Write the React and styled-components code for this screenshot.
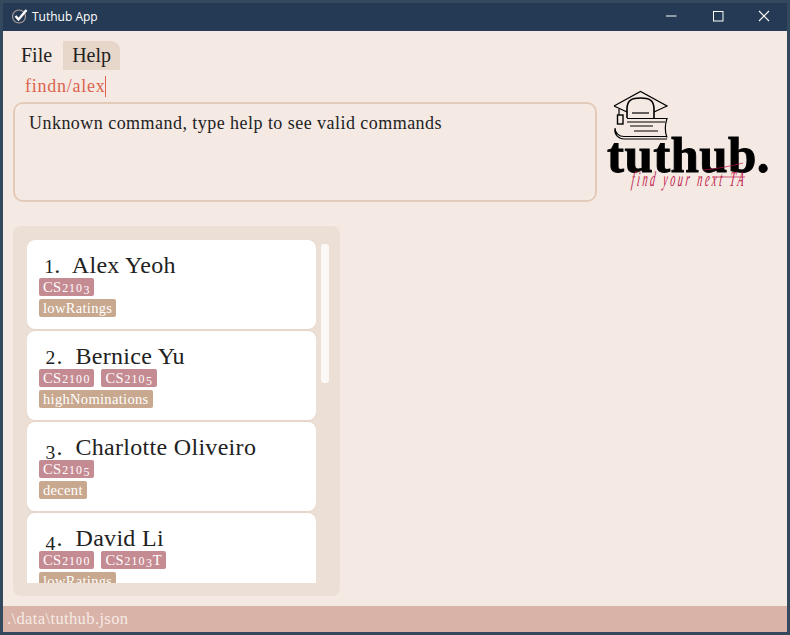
import React from 'react';
import styled, { createGlobalStyle } from 'styled-components';

const people = [
  { name: 'Alex Yeoh', mods: ['CS2103'], tags: ['lowRatings'] },
  { name: 'Bernice Yu', mods: ['CS2100', 'CS2105'], tags: ['highNominations'] },
  { name: 'Charlotte Oliveiro', mods: ['CS2105'], tags: ['decent'] },
  { name: 'David Li', mods: ['CS2100', 'CS2103T'], tags: ['lowRatings'] },
];

const GlobalStyle = createGlobalStyle`
  html, body {
    margin: 0;
    padding: 0;
    width: 790px;
    height: 635px;
    overflow: hidden;
    background: #34495e;
  }
  * {
    box-sizing: border-box;
  }
`;

const Frame = styled.div`
  width: 790px;
  height: 635px;
  display: flex;
  flex-direction: column;
  border: 3px solid #34495e;
  font-family: 'Liberation Serif', serif;
`;

const TitleBar = styled.div`
  height: 28px;
  flex: none;
  display: flex;
  align-items: center;
  background: #253a54;
  color: #fff;
  font-family: 'Open Sans', sans-serif;
  font-size: 12px;
  padding: 0 0 2px 8px;
`;

const TitleText = styled.span`
  margin-left: 3px;
  flex: 1;
`;

const WinButton = styled.div`
  width: 46px;
  height: 26px;
  display: flex;
  align-items: center;
  justify-content: center;
`;

const Body = styled.div`
  flex: 1;
  min-height: 0;
  display: flex;
  flex-direction: column;
  background: #f4e9e3;
`;

const MenuBar = styled.div`
  display: flex;
  gap: 2px;
  padding: 10px 0 0 9px;
  height: 39px;
  flex: none;
`;

const MenuItem = styled.div`
  height: 29px;
  padding: 0 9px;
  font-size: 20px;
  line-height: 28px;
  color: #222;
  border-radius: 0 9px 0 0;
  background: ${(p) => (p.$active ? '#e7d6ca' : 'transparent')};
`;

const CommandLine = styled.div`
  flex: none;
  height: 32px;
  padding: 6px 0 0 22px;
`;

const CommandText = styled.span`
  display: inline-block;
  height: 21px;
  font-size: 18px;
  line-height: 20px;
  letter-spacing: 0.75px;
  color: #dc644e;
  border-right: 1px solid #dc644e;
`;

const TopRow = styled.div`
  flex: none;
  display: flex;
  height: 100px;
  padding-left: 10px;
`;

const ResultBox = styled.div`
  width: 584px;
  height: 100px;
  padding: 8px 14px;
  border: 2px solid #e4cbb9;
  border-radius: 10px;
  background:
    linear-gradient(135deg, #fdfbfa 2px, transparent 6px),
    linear-gradient(315deg, #fdfbfa 2px, transparent 6px);
  font-size: 18px;
  line-height: 22px;
  letter-spacing: 0.46px;
  color: #222;
`;

const LogoWrap = styled.div`
  width: 175px;
  height: 120px;
  margin: -17px 0 0 3px;
`;

const ListPanel = styled.div`
  flex: none;
  width: 327px;
  height: 370px;
  margin: 24px 0 0 10px;
  padding: 14px 10px 13px 14px;
  display: flex;
  gap: 5px;
  background: #ecdfd6;
  border-radius: 8px;
`;

const Cards = styled.div`
  width: 289px;
  height: 343px;
  overflow: hidden;
  display: flex;
  flex-direction: column;
  gap: 2px;
`;

const Card = styled.div`
  flex: none;
  height: 89px;
  padding: 12px 12px 0;
  background: #fff;
  border-radius: 8px;
  box-shadow: 0 0 0 1px #e7d6c9;
`;

const CardName = styled.div`
  padding-left: 5px;
  font-size: 24px;
  line-height: 26px;
  letter-spacing: 0.3px;
  color: #222;
  white-space: pre;
`;

const TagRow = styled.div`
  display: flex;
  gap: 7px;
  height: 18px;
  margin-bottom: 3px;
`;

const Tag = styled.span`
  height: 18px;
  padding: 0 4px;
  border-radius: 2px;
  font-size: 14.5px;
  line-height: 18px;
  letter-spacing: 0.32px;
  white-space: pre;
  color: #fff;
  background: ${(p) => (p.$kind === 'mod' ? '#c58b93' : '#c8a88e')};
`;

// the app's font has old-style figures, this one does not
const Digit = styled.span`
  display: inline-block;
  width: ${(p) => (p.$narrow ? '0.52em' : '0.64em')};
  font-size: 0.82em;
  line-height: 0;
  text-align: center;
  letter-spacing: 0;
  vertical-align: ${(p) => (p.$drop ? '-0.18em' : '0')};
`;

const ScrollThumb = styled.div`
  width: 8px;
  height: 139px;
  margin-top: 4px;
  background: #fbf8f6;
  border-radius: 3px;
`;

const StatusBar = styled.div`
  flex: none;
  margin-top: auto;
  height: 26px;
  padding-left: 4px;
  background: #d9b2a8;
  color: #f6ebe5;
  font-size: 16.5px;
  line-height: 26px;
  letter-spacing: 0.38px;
`;

const OldNums = ({ text }) =>
  text.split(/(\d)/).map((part, i) =>
    /\d/.test(part) ? (
      <Digit key={i} $narrow={part === '1'} $drop={'345'.includes(part)}>
        {part}
      </Digit>
    ) : (
      part
    ),
  );

const AppIcon = () => (
  <svg width="18" height="18" viewBox="0 0 18 18" fill="none">
    <circle cx="8" cy="9.5" r="6.5" stroke="#a89c97" strokeWidth="1.2" />
    <path d="M4.5 9l3 3.5L15.5 3" stroke="#fff" strokeWidth="2.4" />
  </svg>
);

// viewBox sits at page x 600, y 85
const Logo = () => (
  <svg width="175" height="120" viewBox="0 0 175 120" fill="none">
    <g stroke="#000" strokeWidth="1.2">
      <path d="M14 21L40.500 6.500 67 21 54 27M14 21l13 6" />
      <path d="M27 33v-9c0-9 5-11 13.500-11S54 15 54 24v9" strokeWidth="1.6" />
      <path d="M32 28h17" />
      <path d="M19 24v6" />
      <path d="M27 33.500h40c-2 6-2 14 0 19" />
      <path d="M27 37h38M30 41h23M34 46h24" />
      <path d="M15 43c0 5 4 8.500 9 8.500h43M15 43c-1 7 4 11 9 11h43" />
    </g>
    <rect x="17.500" y="30" width="5.500" height="9" fill="#f4e9e3" stroke="#000" strokeWidth="1.4" />
    <text
      x="7"
      y="87"
      fontFamily="'Liberation Serif', serif"
      fontWeight="700"
      fontSize="51"
      letterSpacing="0.4"
      fill="#000"
      stroke="#000"
      strokeWidth="0.9"
    >
      tuthub.
    </text>
    <text
      transform="translate(31 101) scale(1 2.1) skewX(-14)"
      fontFamily="'Liberation Serif', serif"
      fontStyle="italic"
      fontSize="10"
      textLength="112"
      fill="#c0174a"
    >
      find your next TA
    </text>
    <path d="M103 85c14-1 28-4 40-7M112 92h33" stroke="#c0174a" strokeWidth="0.7" />
  </svg>
);

export default function App() {
  return (
    <>
      <GlobalStyle />
      <Frame>
        <TitleBar>
          <AppIcon />
          <TitleText>Tuthub App</TitleText>
          <WinButton>
            <svg width="12" height="2" viewBox="0 0 12 2"><path d="M0 1h10.500" stroke="#fff" /></svg>
          </WinButton>
          <WinButton>
            <svg width="11" height="11" viewBox="0 0 11 11"><rect x="0.500" y="0.500" width="9.500" height="9.500" fill="none" stroke="#fff" /></svg>
          </WinButton>
          <WinButton>
            <svg width="12" height="12" viewBox="0 0 12 12"><path d="M1 1l10 10M11 1L1 11" stroke="#fff" strokeWidth="1.1" /></svg>
          </WinButton>
        </TitleBar>
        <Body>
          <MenuBar>
            <MenuItem>File</MenuItem>
            <MenuItem $active>Help</MenuItem>
          </MenuBar>
          <CommandLine>
            <CommandText>findn/alex</CommandText>
          </CommandLine>
          <TopRow>
            <ResultBox>Unknown command, type help to see valid commands</ResultBox>
            <LogoWrap>
              <Logo />
            </LogoWrap>
          </TopRow>
          <ListPanel>
            <Cards>
              {people.map((p, i) => (
                <Card key={p.name}>
                  <CardName>
                    <OldNums text={`${i + 1}`} />
                    {`.  ${p.name}`}
                  </CardName>
                  <TagRow>
                    {p.mods.map((m) => (
                      <Tag key={m} $kind="mod"><OldNums text={m} /></Tag>
                    ))}
                  </TagRow>
                  <TagRow>
                    {p.tags.map((t) => <Tag key={t} $kind="tag">{t}</Tag>)}
                  </TagRow>
                </Card>
              ))}
            </Cards>
            <ScrollThumb />
          </ListPanel>
          <StatusBar>.\data\tuthub.json</StatusBar>
        </Body>
      </Frame>
    </>
  );
}
